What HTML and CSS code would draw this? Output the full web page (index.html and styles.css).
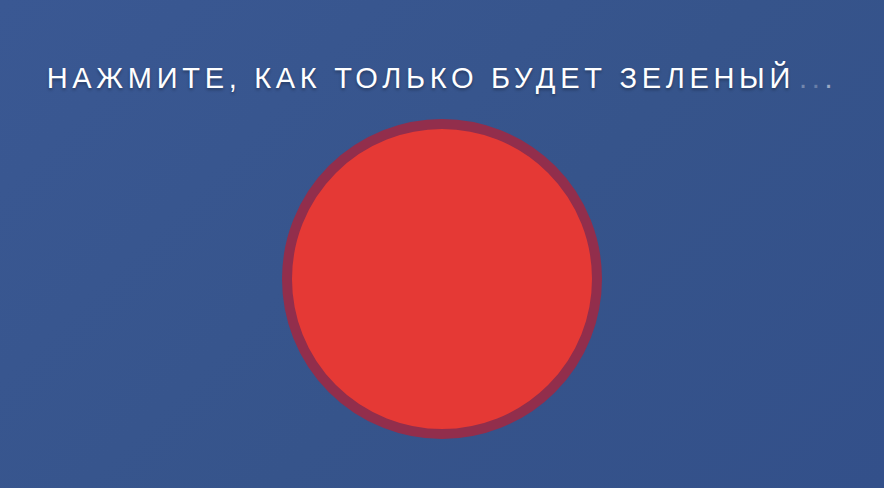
FILE: index.html
```html
<!DOCTYPE html>
<html lang="ru">
<head>
<meta charset="utf-8">
<title>Тест реакции</title>
<link rel="stylesheet" href="styles.css">
</head>
<body>
  <main class="stage">
    <h1 class="prompt">НАЖМИТЕ, КАК ТОЛЬКО БУДЕТ ЗЕЛЕНЫЙ<span class="dots"><span class="dot dot-1">.</span><span class="dot dot-2">.</span><span class="dot dot-3">.</span></span></h1>
    <button class="light" type="button" aria-label="Сигнал"></button>
  </main>
</body>
</html>
```
FILE: styles.css
```css
html, body {
  margin: 0;
  height: 100%;
}

body {
  background: linear-gradient(135deg, #3a5893 0%, #36548b 55%, #33508a 100%);
  font-family: "Liberation Sans", Arial, sans-serif;
  overflow: hidden;
}

.stage {
  display: flex;
  flex-direction: column;
  align-items: center;
  padding-top: 62px;
}

.prompt {
  margin: 0;
  color: #ffffff;
  font-size: 29px;
  font-weight: 400;
  letter-spacing: 4.7px;
  line-height: 32px;
  white-space: nowrap;
  text-shadow: 0 2px 3px rgba(0, 0, 0, 0.3);
}

.dots {
  margin-left: 4px;
  text-shadow: none;
}

.dot {
  color: #ffffff;
}

.dot-1 { opacity: 0.3; }
.dot-2 { opacity: 0.25; }
.dot-3 { opacity: 0.5; }

.light {
  margin-top: 25px;
  width: 320px;
  height: 320px;
  padding: 0;
  border-radius: 50%;
  border: 10px solid #922e4c;
  background: #e53935;
  cursor: pointer;
}
```
